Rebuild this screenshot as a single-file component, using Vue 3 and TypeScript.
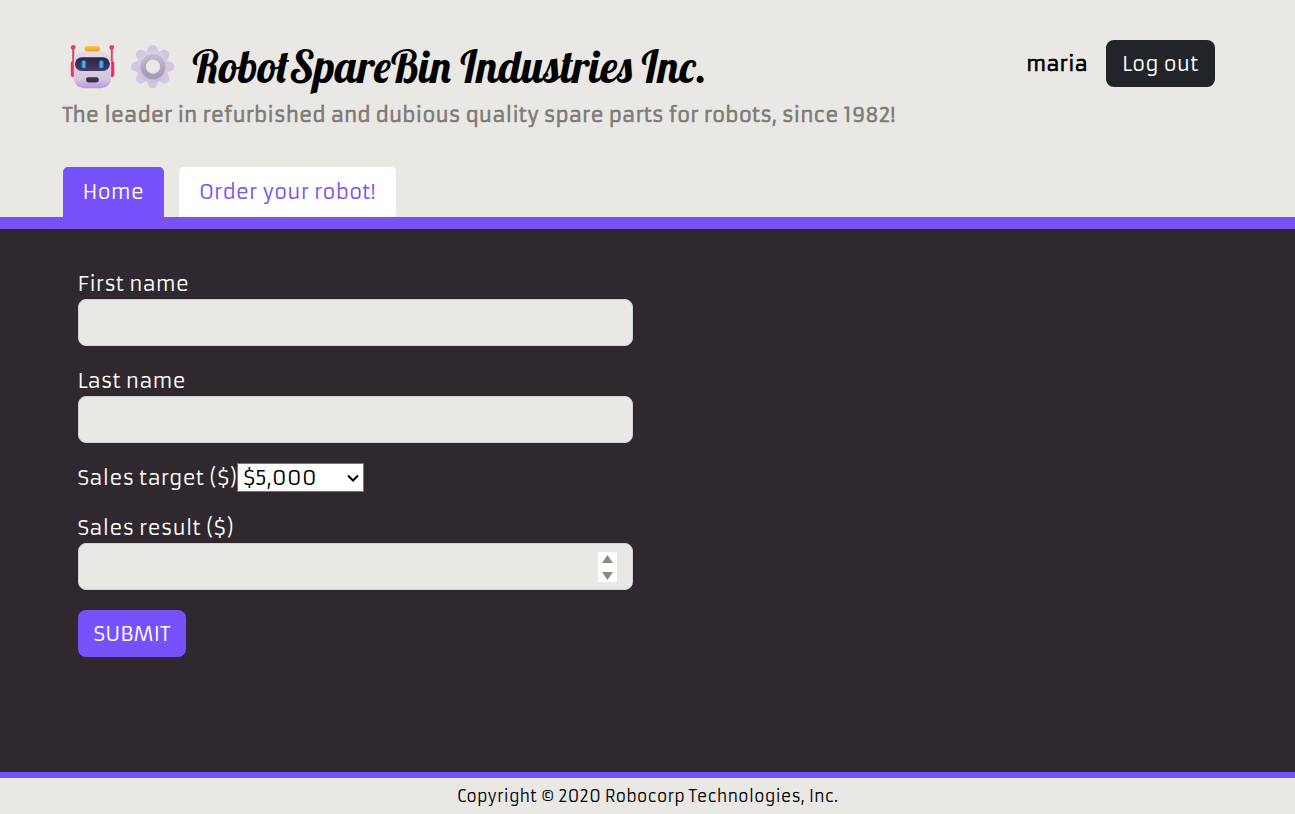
<script setup lang="ts">
import { ref } from 'vue'

const firstName = ref('')
const lastName = ref('')
const salesTarget = ref(5000)
const salesResult = ref('')

const targets: number[] = Array.from({ length: 20 }, (_, i) => (i + 1) * 5000)
const teeth: number[] = [0, 45, 90, 135, 180, 225, 270, 315]

const formatDollars = (value: number): string => '$' + value.toLocaleString('en-US')
</script>

<template>
  <div class="page">
    <header class="header">
      <div class="container">
        <div class="top">
          <div class="brand">
            <h1 class="title">
              <svg class="emoji" viewBox="0 0 48 48" aria-hidden="true">
                <defs>
                  <linearGradient id="face" x1="0" y1="0" x2="0" y2="1">
                    <stop offset="0" stop-color="#e3dbe6" />
                    <stop offset="0.75" stop-color="#d3c6de" />
                    <stop offset="1" stop-color="#bd94e4" />
                  </linearGradient>
                  <linearGradient id="visor" x1="0" y1="0" x2="0" y2="1">
                    <stop offset="0" stop-color="#2c2540" />
                    <stop offset="1" stop-color="#493b66" />
                  </linearGradient>
                  <linearGradient id="cap" x1="0" y1="0" x2="0" y2="1">
                    <stop offset="0" stop-color="#ffcb45" />
                    <stop offset="1" stop-color="#eb9b25" />
                  </linearGradient>
                </defs>
                <path d="M4.2 6v15M42.8 6v15" stroke="#ee3b68" stroke-width="2" />
                <circle cx="4.2" cy="4.4" r="2.4" fill="#e93d66" />
                <circle cx="42.8" cy="4.4" r="2.4" fill="#e93d66" />
                <rect x="1.8" y="18" width="5" height="16" rx="2" fill="#e9365f" />
                <rect x="40.2" y="18" width="5" height="16" rx="2" fill="#fb245f" />
                <rect x="4.8" y="8.2" width="37.4" height="37" rx="10" fill="url(#face)" />
                <rect x="15.6" y="3" width="15.6" height="5.4" rx="2.4" fill="url(#cap)" />
                <rect x="6" y="14.2" width="34.8" height="13.8" rx="6.7" fill="url(#visor)" />
                <rect x="12.4" y="17.2" width="4.6" height="8" rx="2" fill="#168ce8" />
                <rect x="30" y="17.2" width="4.6" height="8" rx="2" fill="#168ce8" />
                <rect x="13.8" y="17.8" width="1.9" height="7" rx="0.9" fill="#43bdf2" />
                <rect x="31.4" y="17.8" width="1.9" height="7" rx="0.9" fill="#43bdf2" />
                <rect x="17" y="34.2" width="12.8" height="5.2" rx="2.4" fill="#3a304f" />
              </svg>
              <svg class="emoji" viewBox="0 0 48 48" aria-hidden="true">
                <defs>
                  <linearGradient id="tooth" x1="0" y1="0" x2="0" y2="1">
                    <stop offset="0" stop-color="#d8cfe4" />
                    <stop offset="1" stop-color="#cdbde0" />
                  </linearGradient>
                  <linearGradient id="hub" x1="0" y1="0" x2="0" y2="1">
                    <stop offset="0" stop-color="#c2bac8" />
                    <stop offset="1" stop-color="#a898b8" />
                  </linearGradient>
                </defs>
                <path
                  v-for="angle in teeth"
                  :key="angle"
                  d="M17.4 10L19.4 4.4Q20.2 2.2 22.2 2.2H25Q27 2.2 27.8 4.4L29.8 10V20H17.4Z"
                  :transform="`rotate(${angle} 23.6 23.6)`"
                  fill="#d2c6e0"
                />
                <circle cx="23.6" cy="23.6" r="15.6" fill="url(#tooth)" />
                <circle cx="24" cy="23.8" r="9.8" fill="none" stroke="url(#hub)" stroke-width="5.4" />
                <circle cx="24" cy="23.6" r="7" fill="#e9e8e4" />
              </svg>
              <span>RobotSpareBin Industries Inc.</span>
            </h1>
            <p class="tagline">The leader in refurbished and dubious quality spare parts for robots, since 1982!</p>
          </div>
          <div class="account">
            <span class="username">maria</span>
            <button type="button" class="button dark">Log out</button>
          </div>
        </div>
        <nav class="tabs">
          <a href="#/" class="tab active">Home</a>
          <a href="#/robot-order" class="tab">Order your robot!</a>
        </nav>
      </div>
    </header>

    <main class="main">
      <div class="container columns">
        <form class="form" @submit.prevent>
          <div class="field">
            <label for="firstname">First name</label>
            <input id="firstname" v-model="firstName" type="text" class="control" />
          </div>
          <div class="field">
            <label for="lastname">Last name</label>
            <input id="lastname" v-model="lastName" type="text" class="control" />
          </div>
          <div class="field inline">
            <label for="salestarget">Sales target ($)</label>
            <select id="salestarget" v-model="salesTarget" class="select">
              <option v-for="target in targets" :key="target" :value="target">{{ formatDollars(target) }}</option>
            </select>
          </div>
          <div class="field">
            <label for="salesresult">Sales result ($)</label>
            <input id="salesresult" v-model="salesResult" type="number" class="control" />
          </div>
          <button type="submit" class="button primary">SUBMIT</button>
        </form>
      </div>
    </main>

    <footer class="footer">Copyright © 2020 Robocorp Technologies, Inc.</footer>
  </div>
</template>

<style>
body {
  margin: 0;
}
</style>

<style scoped>
* {
  box-sizing: border-box;
}

.page {
  display: flex;
  flex-direction: column;
  min-height: 100vh;
  background: #e9e8e4;
  color: #000;
  font-family: Armata, "Noto Sans", "Open Sans", sans-serif;
  font-size: 20px;
  line-height: 30px;
}

.container {
  width: 100%;
  max-width: 1170px;
  margin: 0 auto;
}

.header {
  padding-top: 40px;
  border-bottom: 12px solid #7751fa;
}

.top {
  display: flex;
  justify-content: space-between;
  align-items: flex-start;
}

.title {
  display: flex;
  align-items: center;
  height: 54px;
  margin: 0;
  padding-left: 6px;
  gap: 12px;
  font-family: Lobster, "Liberation Serif", serif;
  font-size: 44px;
  font-weight: 400;
  line-height: 52px;
  white-space: nowrap;
}

.emoji {
  flex: none;
  width: 48px;
  height: 48px;
}

.title span {
  padding-left: 4px;
}

.tagline {
  margin: 6px 0 0;
  color: #827c7a;
  font-weight: 700;
}

.account {
  display: flex;
  align-items: center;
  gap: 18px;
  padding-right: 18px;
}

.username {
  font-weight: 700;
}

.button {
  height: 47px;
  padding: 0 16px;
  border: 0;
  border-radius: 8px;
  color: #fff;
  font: inherit;
  cursor: pointer;
}

.dark {
  background: #212529;
}

.primary {
  align-self: flex-start;
  background: #7751fa;
}

.tabs {
  display: flex;
  gap: 15px;
  margin-top: 37px;
}

.tab {
  padding: 10px 20px;
  border-radius: 5px 5px 0 0;
  background: #fff;
  color: #7751fa;
  text-decoration: none;
}

.tab.active {
  background: #7751fa;
  color: #fff;
}

.main {
  flex: 1;
  padding: 40px 0;
  background: #2f282f;
  color: #fff;
}

.columns {
  display: grid;
  grid-template-columns: 1fr 1fr;
}

.form {
  display: flex;
  flex-direction: column;
  gap: 20px;
  padding: 0 15px;
}

.field {
  display: flex;
  flex-direction: column;
}

.inline {
  flex-direction: row;
  align-items: flex-start;
}

.control {
  width: 100%;
  height: 47px;
  padding: 7px 15px;
  border: 1px solid #ced4da;
  border-radius: 8px;
  background: #e9e8e4;
  color: #000;
  font: inherit;
}

.control::-webkit-inner-spin-button {
  appearance: none;
  width: 19px;
  height: 30px;
  background: #fff url("data:image/svg+xml,%3Csvg xmlns='http://www.w3.org/2000/svg' width='19' height='30' fill='%238b8b8b'%3E%3Cpath d='M4 11L9.5 3L15 11ZM4 20L9.5 28L15 20Z'/%3E%3C/svg%3E") no-repeat center;
  opacity: 1;
}

.select {
  width: 127px;
  height: 29px;
  padding: 0 5px;
  border: 1px solid #767676;
  border-radius: 0;
  appearance: none;
  background: #fff url("data:image/svg+xml,%3Csvg xmlns='http://www.w3.org/2000/svg' width='12' height='8' fill='none' stroke='black' stroke-width='2'%3E%3Cpath d='M1 1.5L6 6.5L11 1.5'/%3E%3C/svg%3E") no-repeat right 4px center;
  color: #000;
  font: inherit;
  line-height: 27px;
}

.footer {
  border-top: 6px solid #7751fa;
  padding: 3px 16px;
  font-size: 16px;
  text-align: center;
}
</style>
